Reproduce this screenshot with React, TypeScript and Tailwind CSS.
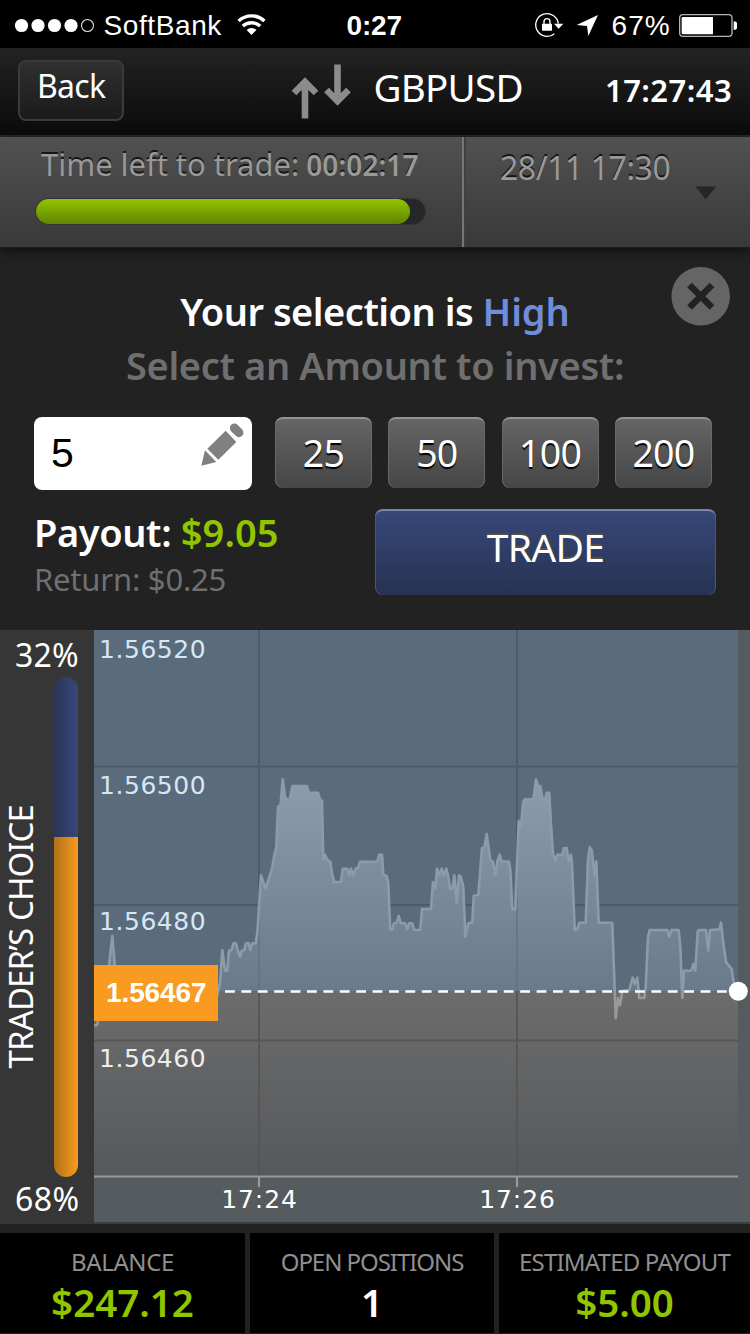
import React from "react";

const NOTO = "font-['Noto_Sans',sans-serif]";
const ARIAL = "font-['Liberation_Sans',sans-serif]";

/* Quote history as [x, y] pairs in chart pixels. */
const QUOTES: [number, number][] = [
  [94, 1025.5], [97, 1025], [98.5, 1019], [108, 975], [112.3, 936], [115, 968], [119, 1000], [216, 1000],
  [218.3, 990.7], [220, 983.3], [222.3, 950], [225, 970.7], [227.3, 970.7], [229, 950.7], [231.7, 950],
  [233.5, 943.3], [236, 943.3], [237.7, 950], [240, 956.7], [241.7, 950.7], [244.3, 950], [246, 943.3],
  [248.7, 943.3], [250.3, 950], [252.3, 943.3], [255.7, 943.3], [257.3, 933.3], [259, 906.7], [261, 875.3],
  [263.3, 882], [265.7, 888.7], [268.3, 880], [271.7, 870], [274.7, 853.3], [276.3, 847], [278, 806.7],
  [280.5, 805], [282.7, 779.3], [285, 796.7], [287.3, 800], [289.7, 799.3], [292.5, 786], [306.7, 786],
  [309, 792.7], [318, 792.7], [320, 799.3], [322, 800.7], [323.3, 860], [325, 854.7], [327.3, 860],
  [330.3, 861.7], [332.3, 875], [334.3, 882], [341, 882], [342.7, 868.7], [347.3, 868.7], [349, 875.3],
  [351, 868.7], [353.3, 875.3], [355.7, 868.7], [358, 867.7], [360, 861.7], [377.3, 861.7], [379.3, 854.7],
  [382, 854.7], [383.3, 874.7], [386.7, 876], [388.3, 883.3], [390.2, 929.3], [392.3, 929.3], [394, 923.3],
  [396.7, 922.7], [398.7, 916], [401, 923.3], [405.3, 923.3], [407.3, 929.3], [409.3, 923.3], [412.3, 923.3],
  [414.3, 930], [420.3, 930], [422, 909], [431, 909], [433, 882], [435.3, 888.3], [437, 868.7],
  [439.3, 875.3], [441.7, 868.7], [444, 875.3], [446.3, 868.7], [448, 875.3], [450, 888.7], [452.3, 888.7],
  [454.3, 875.3], [456.7, 902.7], [459, 875.3], [460.7, 876.7], [463.3, 886.7], [465.3, 936.7], [468.3, 923.3],
  [472.3, 922.7], [473.7, 895.7], [478.3, 895], [482, 848], [484.3, 848], [486.7, 834], [490.3, 860],
  [493, 861.7], [495.3, 875.3], [497.7, 860], [499.7, 854.7], [501.7, 861.3], [509, 861.7], [510.3, 870],
  [512.3, 909.3], [515.3, 909.3], [518.7, 820.7], [521, 826.7], [523.3, 801.7], [525, 799.3], [533.3, 799.3],
  [536, 779.3], [538.3, 786.7], [540.3, 786], [542.7, 799.3], [545, 799.3], [546.7, 792.7], [549.3, 792.7],
  [550.7, 820], [553, 853.3], [555.3, 861.3], [557.3, 854.7], [562.3, 854.7], [564, 848], [566.7, 848],
  [568.7, 861.3], [571, 854.7], [572, 863.3], [574.7, 930], [577.3, 929.3], [579.3, 922.7], [585.7, 922.7],
  [588, 860], [589.7, 847.3], [591.7, 850], [594.7, 875.3], [596.3, 861.3], [598.7, 922.7], [612.3, 922.7],
  [615.7, 1018.3], [618, 998.3], [620, 1005.3], [622.3, 990.7], [629.3, 990], [632.7, 977.7], [635, 984],
  [637.3, 977.7], [639.3, 998], [644.3, 998], [645.7, 986.7], [648, 936.7], [649.7, 930], [667.3, 930],
  [669.3, 936.7], [671.3, 930], [678.7, 930], [680.3, 946.7], [682.3, 998], [684, 970.7], [691.3, 970.7],
  [693.3, 964], [695.3, 970.7], [697.7, 931.7], [699.3, 930], [706, 930], [708.3, 950.7], [710, 930],
  [719.3, 929.3], [721, 922.7], [723.3, 943.3], [726, 961.7], [731.7, 969.3], [733.7, 983.3], [738, 991],
];

const LINE = "M" + QUOTES.map(([x, y]) => `${x} ${y}`).join("L");
const PRICES = [
  { label: "1.56520", y: 657.5 },
  { label: "1.56500", y: 794 },
  { label: "1.56480", y: 930 },
  { label: "1.56460", y: 1067 },
];
const TIMES = [
  { label: "17:24", x: 259 },
  { label: "17:26", x: 517 },
];

function StatusBar() {
  return (
    <div className={`${ARIAL} flex h-12 shrink-0 items-start bg-black text-[28px] leading-none text-white`}>
      <svg className="ml-[14px] mt-[18px] h-[15px] w-[81px]" viewBox="14 18 81 15">
        {[21.5, 38, 54.5, 71].map((x) => (
          <circle key={x} cx={x} cy="25.5" r="6.6" fill="#fff" />
        ))}
        <circle cx="87.5" cy="25.5" r="6" fill="none" stroke="#ddd" strokeWidth="1.1" />
      </svg>
      <span className="ml-[8.5px] mt-[12px] w-[118px] tracking-[0.6px]">SoftBank</span>
      <svg className="ml-[14px] mt-[13px] h-[23px] w-[31px]" viewBox="-15.5 -22 31 23">
        <g fill="none" stroke="#fff" strokeWidth="3.4">
          <path d="M-12.9 -14.1A19 19 0 0 1 12.9 -14.1" />
          <path d="M-8.7 -8.9A12.8 12.8 0 0 1 8.7 -8.9" />
        </g>
        <path d="M0 0L-4.9 -5.1A7.3 7.3 0 0 1 4.9 -5.1Z" fill="#fff" />
      </svg>
      <span className="ml-[80px] mt-[12px] w-[58px] font-bold tracking-[-0.15px]">0:27</span>
      <svg className="ml-[130px] mt-[12px] h-[26px] w-[30px]" viewBox="0 21 90 78">
        <path d="M70 56A34 34 0 1 0 58 86" fill="none" stroke="#fff" strokeWidth="4" />
        <path d="M57 56H85L71 71Z" fill="#fff" />
        <path d="M27 58V50a9 9 0 0 1 18 0V58" fill="none" stroke="#fff" strokeWidth="4" />
        <rect x="21" y="56" width="30" height="21" rx="2" fill="#fff" />
      </svg>
      <svg className="ml-[11px] mt-[14px] h-[23px] w-[23px]" viewBox="603 42 69 69">
        <path d="M669 45L605 75L636 78L640 108Z" fill="#fff" />
      </svg>
      <span className="ml-[13px] mt-[12px] w-[60px] tracking-[1.1px]">67%</span>
      <svg className="ml-[7px] mt-[14px] h-[23px] w-[58px]" viewBox="434 27 174 69">
        <rect x="436" y="29" width="157" height="65" rx="10" fill="none" stroke="#b4b4b4" strokeWidth="4" />
        <path d="M446 36H536V88H446a4 4 0 0 1-4-4V40a4 4 0 0 1 4-4Z" fill="#fff" />
        <path d="M598 49A13 13 0 0 1 598 75Z" fill="#fff" />
      </svg>
    </div>
  );
}

function Header() {
  return (
    <header
      className={`${NOTO} flex h-[89px] shrink-0 items-start border-b-2 border-[#2b2b2b] bg-linear-to-b from-[#232323] to-[#0b0b0b] leading-none text-white`}
    >
      <button className="ml-[18px] mt-[12px] flex h-[61px] w-[106px] items-start rounded-lg border-2 border-[#3b3b3b] bg-linear-to-b from-[#303030] to-[#1b1b1b] pl-[17px] pt-[8px] text-[32px] leading-none tracking-[-0.7px]">
        Back
      </button>
      <svg className="ml-[166px] mt-[14px] h-[60px] w-[64px]" viewBox="290 62 64 60">
        <g fill="none" stroke="#8c8c8c" strokeWidth="6.6">
          <path d="M305 118.5V84M294 93L305 82L316 93" />
          <path d="M337.5 64.5V99M326.5 90L337.5 101L348.5 90" />
        </g>
      </svg>
      <h1 className="ml-[19.5px] mt-[20px] w-[160px] text-[38.5px] tracking-[-0.75px]">GBPUSD</h1>
      <span className="ml-[71.5px] mt-[27px] text-[31px] font-semibold tracking-[0.45px]">17:27:43</span>
    </header>
  );
}

function Expiry() {
  return (
    <section
      className={`${NOTO} relative z-10 flex h-[111px] shrink-0 border-b border-[#1a1a1a] bg-linear-to-b from-[#515151] to-[#393939] leading-none text-[#999] shadow-[0_2px_10px_#0c0c0c]`}
    >
      <div className="flex w-[464px] flex-col border-r-2 border-[#767676] pl-[35px]">
        <div className="ml-[6px] mt-[12px] flex h-[31px] items-baseline gap-[7px] whitespace-nowrap [text-shadow:0_-2px_0_#151515]">
          <span className="text-[31px] tracking-[-0.03px]">Time left to trade:</span>
          <span className="text-[28px] font-semibold tracking-[0.1px]">00:02:17</span>
        </div>
        <div className="mt-[18px] flex h-[27px] w-[391px] rounded-full border border-[#333] bg-[#252728]">
          <div className="h-[25px] w-[374px] rounded-full bg-linear-to-b from-[#91c500] to-[#618500]" />
        </div>
      </div>
      <div className="flex grow items-start border-l-2 border-[#404040]">
        <span className="ml-[34px] mt-[15px] w-[195px] text-[32px] tracking-[-0.45px] [text-shadow:0_-2px_0_#151515]">
          28/11 17:30
        </span>
        <svg className="mt-[49px] h-[14px] w-[22px]" viewBox="0 0 22 14">
          <path d="M0.5 0.5H21L10.7 13.5Z" fill="#262626" />
        </svg>
      </div>
    </section>
  );
}

function AmountButton({ value }: { value: number }) {
  return (
    <button className="flex h-[71px] w-[97px] justify-center rounded-lg border-t-2 border-[#939393] bg-linear-to-b from-[#656565] to-[#464646] pt-[15px] text-[37.5px] leading-none tracking-[-0.8px] shadow-[inset_1px_0_0_#686868,inset_-1px_0_0_#686868] [text-shadow:0_2px_1px_#000]">
      {value}
    </button>
  );
}

function TradePanel() {
  return (
    <section className={`${NOTO} relative flex h-[382px] shrink-0 flex-col bg-[#222] pl-[34px] leading-none text-white`}>
      <button className="absolute left-[671px] top-[18.5px]" aria-label="Close">
        <svg className="block size-[59px]" viewBox="0 0 59 59">
          <circle cx="29.7" cy="29.3" r="29.3" fill="#656565" />
          <path d="M18.5 18L41 40.5M41 18L18.5 40.5" stroke="#222" strokeWidth="6.6" />
        </svg>
      </button>
      <h2 className="mt-[44px] -ml-[34px] text-center text-[38px] font-semibold tracking-[-0.5px]">
        Your selection is <span className="tracking-[-0.1px] text-[#718cd8]">High</span>
      </h2>
      <p className="mt-[16px] -ml-[34px] text-center text-[38px] font-semibold tracking-[-0.35px] text-[#6f6f6f]">
        Select an Amount to invest:
      </p>
      <div className="mt-[33px] flex">
        <div className={`${ARIAL} flex h-[73px] w-[218px] items-start justify-between rounded-lg bg-white pl-[17px] pr-[8px] text-black`}>
          <span className="mt-[16px] text-[41px]">5</span>
          <svg className="mt-[6px] size-[43px]" viewBox="603 520 129 129" fill="#808080">
            <path d="M604 648L615 602L649 637ZM622 597L677 543L709 577L655 630Z" />
            <path d="M703 535L717 549" stroke="#808080" strokeWidth="27" strokeLinecap="round" />
          </svg>
        </div>
        <div className="ml-[23px] flex gap-[16.3px]">
          {[25, 50, 100, 200].map((v) => (
            <AmountButton key={v} value={v} />
          ))}
        </div>
      </div>
      <div className="mt-[19px] flex">
        <div className="mt-[4px] w-[341px]">
          <p className="text-[38px] font-semibold tracking-[-0.4px]">
            Payout: <span className="tracking-[0.1px] text-[#91c500]">$9.05</span>
          </p>
          <p className="mt-[13px] text-[31px] tracking-[-0.2px] text-[#6f6f6f]">Return: $0.25</p>
        </div>
        <button className="flex h-[86px] w-[341px] justify-center rounded-lg border-t-2 border-[#7a87ac] bg-linear-to-b from-[#374879] to-[#273252] pt-[16px] text-[39px] leading-none tracking-[-0.7px] shadow-[inset_1px_0_0_#46568a,inset_-1px_0_0_#46568a] [text-shadow:0_-2px_1px_#57503f]">
          TRADE
        </button>
      </div>
    </section>
  );
}

function TradersChoice() {
  return (
    <aside className={`${NOTO} flex h-[594px] w-[94px] flex-col bg-[#363636] leading-none text-white`}>
      <span className="ml-[15px] mt-[9px] h-[32px] text-[32px] tracking-[0.2px]">32%</span>
      <div className="mt-[6px] flex h-[500px]">
        <div className="flex w-[54px] items-start pl-[4px]">
          <span className="mt-[128px] rotate-180 whitespace-nowrap text-[33px] leading-none tracking-[-0.9px] [writing-mode:vertical-rl]">
            TRADER’S CHOICE
          </span>
        </div>
        <div className="flex w-[24px] flex-col overflow-hidden rounded-full">
          <div className="h-[32%] bg-linear-to-r from-[#2a3657] to-[#374879]" />
          <div className="h-[68%] bg-linear-to-r from-[#b17118] to-[#f89b20]" />
        </div>
      </div>
      <span className="ml-[15px] mt-[6px] text-[32px] tracking-[0.4px]">68%</span>
    </aside>
  );
}

function Chart() {
  return (
    <svg className="h-[594px] w-[656px] bg-[#565b5f]" viewBox="94 630 656 594">
      <defs>
        <linearGradient id="area" gradientUnits="userSpaceOnUse" x1="0" y1="779" x2="0" y2="991">
          <stop offset="0" stopColor="#8d9cab" />
          <stop offset="1" stopColor="#697a8c" />
        </linearGradient>
        <linearGradient id="floor" x1="0" y1="0" x2="0" y2="1">
          <stop offset="0" stopColor="#6c6c6c" />
          <stop offset="1" stopColor="#56595c" />
        </linearGradient>
        <clipPath id="above">
          <rect x="94" y="630" width="644" height="361" />
        </clipPath>
        <clipPath id="below">
          <rect x="94" y="991" width="644" height="185" />
        </clipPath>
      </defs>
      <rect x="94" y="630" width="644" height="361" fill="#5a6c7c" />
      <path d="M94 766.5H738M94 905H738M259 630V991M517 630V991" stroke="#4b5b69" strokeWidth="2" />
      <path d={`${LINE}L738 1176H94Z`} fill="url(#area)" clipPath="url(#above)" />
      <path d="M259 908V991M517 870V991" stroke="#5f6f7e" strokeWidth="2" opacity="0.6" />
      <rect x="94" y="991" width="644" height="185" fill="url(#floor)" />
      <path d="M94 1040.5H738M259 991V1176M517 991V1176" stroke="#545454" strokeWidth="2" opacity="0.85" />
      <path d={LINE} fill="none" stroke="#8b9baa" strokeWidth="2.6" strokeLinejoin="round" clipPath="url(#above)" />
      <path d={LINE} fill="none" stroke="#999" strokeWidth="2.6" strokeLinejoin="round" clipPath="url(#below)" />
      <path d="M94 1176.5H738M259 1177V1187M517 1177V1187" stroke="#999" strokeWidth="2.2" />
      <rect x="94" y="1222" width="656" height="2" fill="#3c3f41" />
      <path d="M225 991.5H730" stroke="#fff" strokeWidth="2.6" strokeDasharray="9.8 6.6" />
      <circle cx="738.3" cy="991.3" r="9.5" fill="#fff" />
      <rect x="94" y="965" width="124" height="56" fill="#f89b20" />
      <text x="106" y="1002" fill="#fff" className={`${ARIAL} text-[28px] font-bold tracking-[-0.1px]`}>
        1.56467
      </text>
      <g className="font-['DejaVu_Sans',sans-serif] text-[25px]">
        {PRICES.map((p) => (
          <text key={p.label} x="99" y={p.y} fill={p.y > 991 ? "#eee" : "#d6e6f5"} className="tracking-[0.55px]">
            {p.label}
          </text>
        ))}
        {TIMES.map((t) => (
          <text key={t.label} x={t.x + 0.5} y="1208" textAnchor="middle" fill="#fff" className="tracking-[0.9px]">
            {t.label}
          </text>
        ))}
      </g>
    </svg>
  );
}

function Stat({ label, value, width, labelStyle, valueStyle }: { label: string; value: string; width: string; labelStyle: string; valueStyle: string }) {
  return (
    <div className={`flex flex-col items-center bg-black pt-[17px] ${width}`}>
      <span className={`h-[24px] whitespace-nowrap text-[#8f8f8f] ${labelStyle}`}>{label}</span>
      <span className={`mt-[9px] text-[38.5px] font-semibold ${valueStyle}`}>{value}</span>
    </div>
  );
}

export default function App() {
  return (
    <main className="flex h-[1334px] w-[750px] flex-col overflow-hidden bg-[#222]">
      <StatusBar />
      <Header />
      <Expiry />
      <TradePanel />
      <div className="flex h-[594px] shrink-0">
        <TradersChoice />
        <Chart />
      </div>
      <footer className={`${NOTO} mt-[9px] flex h-[100px] shrink-0 justify-between leading-none`}>
        <Stat label="BALANCE" value="$247.12" width="w-[245px]" labelStyle="text-[24px] tracking-[-0.4px]" valueStyle="text-[#91c500]" />
        <Stat label="OPEN POSITIONS" value="1" width="w-[244px]" labelStyle="text-[24px] tracking-[-1.05px]" valueStyle="text-white" />
        <Stat label="ESTIMATED PAYOUT" value="$5.00" width="w-[251px]" labelStyle="text-[24px] tracking-[-0.8px]" valueStyle="text-[#91c500]" />
      </footer>
    </main>
  );
}
